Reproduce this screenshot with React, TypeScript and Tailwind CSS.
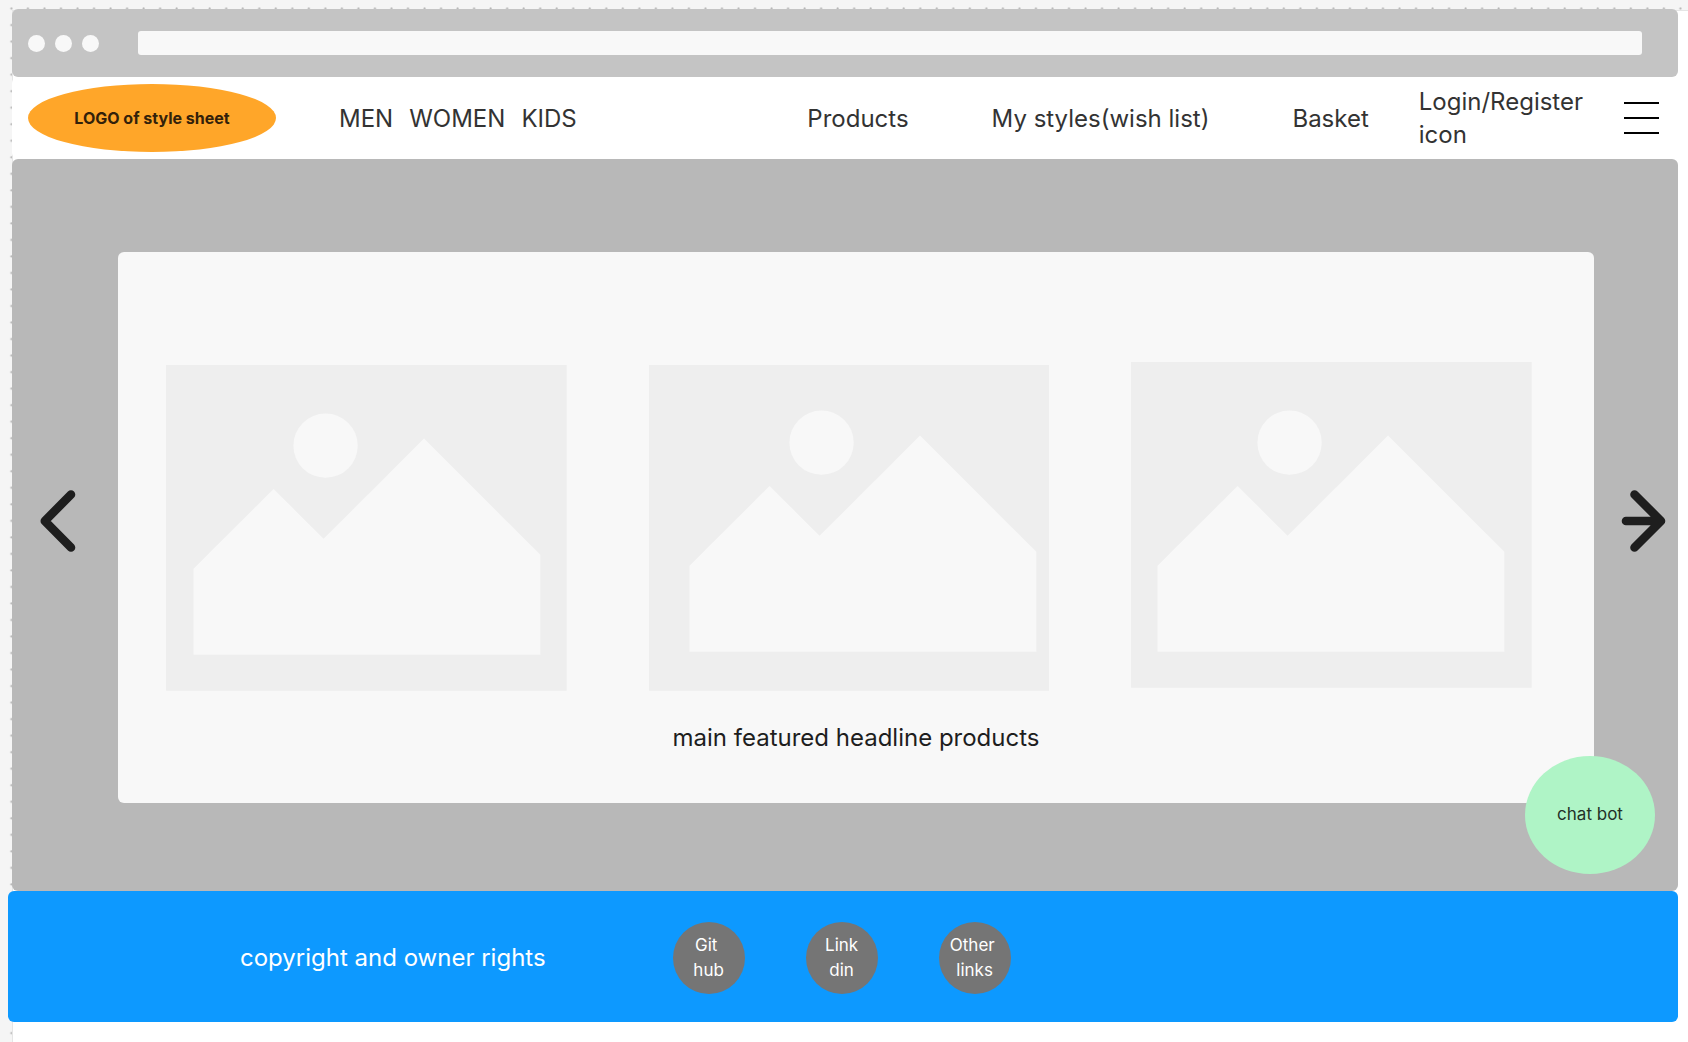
type Placeholder = { name: string; frameY: number; artX: number; artY: number };

const placeholders: Placeholder[] = [
  { name: 'Featured product 1', frameY: 3, artX: 1, artY: 3 },
  { name: 'Featured product 2', frameY: 3, artX: 14, artY: 0 },
  { name: 'Featured product 3', frameY: 0, artX: 0, artY: 0 },
];

const socialLinks = [
  { top: 'Git ', bottom: 'hub' },
  { top: 'Link', bottom: 'din' },
  { top: 'Other ', bottom: 'links' },
];

function CanvasBackdrop() {
  return (
    <>
      <svg className="absolute inset-0 h-full w-full" aria-hidden="true">
        <defs>
          <pattern id="grid" x="3" y="0.4" width="16.525" height="16.525" patternUnits="userSpaceOnUse">
            <circle cx="8.4" cy="8.2" r="1.1" fill="#b3b3b3" />
          </pattern>
        </defs>
        <rect width="100%" height="100%" fill="url(#grid)" />
      </svg>
      <div className="absolute top-[10px] right-0 bottom-0 left-3 border-t border-l border-[#e5e5e5] bg-white" />
    </>
  );
}

function BrowserBar() {
  return (
    <div className="flex h-[68px] items-center rounded-md bg-[#c4c4c4] pr-9 pl-4">
      <div className="flex gap-[10px]">
        <span className="size-[17px] rounded-full bg-[#f8f8f8]" />
        <span className="size-[17px] rounded-full bg-[#f8f8f8]" />
        <span className="size-[17px] rounded-full bg-[#f8f8f8]" />
      </div>
      <input
        type="text"
        aria-label="Address"
        className="ml-[39px] h-6 min-w-0 flex-1 rounded-[3px] bg-[#f8f8f8] px-2 text-sm outline-none"
      />
    </div>
  );
}

function NavBar() {
  return (
    <nav className="flex min-h-[82px] items-center rounded-md bg-white pr-[19px] pl-4 text-2xl leading-[33px] text-[#333333]">
      <a
        href="#home"
        className="flex h-[68px] w-[248px] shrink-0 items-center justify-center rounded-[50%] bg-[#ffa629] text-base font-bold text-[#33210a]"
      >
        LOGO of style sheet
      </a>
      <div className="ml-[63px] flex gap-4">
        <a href="#men">MEN</a>
        <a href="#women">WOMEN</a>
        <a href="#kids">KIDS</a>
      </div>
      <div className="ml-auto flex items-center">
        <a href="#products" className="mr-[83px]">Products</a>
        <a href="#styles" className="mr-[83px]">My styles(wish list)</a>
        <a href="#basket" className="mr-[50px]">Basket</a>
        <a href="#login" className="mr-[41px]">
          Login/Register
          <br />
          icon
        </a>
        <button type="button" aria-label="Menu" className="flex w-[35px] flex-col gap-[13px]">
          <span className="h-[2px] w-full bg-black" />
          <span className="h-[2px] w-full bg-black" />
          <span className="h-[2px] w-full bg-black" />
        </button>
      </div>
    </nav>
  );
}

function ProductImage({ name, frameY, artX, artY }: Placeholder) {
  return (
    <svg viewBox="0 0 401 329" className="min-w-0 flex-1" role="img" aria-label={name}>
      <rect y={frameY} width="401" height="326" fill="#eeeeee" />
      <g fill="#f8f8f8" transform={`translate(${artX} ${artY})`}>
        <circle cx="158.7" cy="80.7" r="32.2" />
        <path d="M26.5 204 L106.7 124 L156.7 174 L257.3 73.6 L373.7 190 V290 H26.5 Z" />
      </g>
    </svg>
  );
}

function Hero() {
  return (
    <section className="relative grid grid-cols-[106px_1fr_84px] items-center rounded-md bg-[#b8b8b8] pt-[93px] pb-[88px]">
      <button type="button" aria-label="Previous" className="mb-3 ml-[25px] w-12">
        <svg viewBox="0 0 48 64" className="h-16 w-12" fill="none" stroke="#1e1e1e" strokeWidth="8.6" strokeLinecap="round" strokeLinejoin="round">
          <path d="M34 5.5 L7.8 32 L34 58.5" />
        </svg>
      </button>
      <div className="rounded-md bg-[#f8f8f8] pt-[110px] pr-[62px] pb-[49px] pl-12">
        <div className="flex gap-[82px]">
          {placeholders.map((p) => (
            <ProductImage key={p.name} {...p} />
          ))}
        </div>
        <h1 className="mt-[31px] -mr-[14px] text-center text-2xl leading-8 text-[#1e1e1e]">
          main featured headline products
        </h1>
      </div>
      <button type="button" aria-label="Next" className="mb-3 ml-6 w-12">
        <svg viewBox="0 0 48 64" className="h-16 w-12" fill="none" stroke="#1e1e1e" strokeWidth="8.6" strokeLinecap="round" strokeLinejoin="round">
          <path d="M16.5 5.5 L43 32 L16.5 58.5 M8 32 H43" />
        </svg>
      </button>
      <button
        type="button"
        className="absolute right-[23px] bottom-[17px] h-[118px] w-[130px] rounded-[50%] bg-[#aff4c6] text-[17px] text-[#233128]"
      >
        chat bot
      </button>
    </section>
  );
}

function Footer() {
  return (
    <footer className="-ml-1 flex h-[131px] items-center rounded-md bg-[#0d99ff] pt-[3px] pl-[232px] text-white">
      <p className="text-2xl leading-8">copyright and owner rights</p>
      <div className="ml-[127px] flex gap-[61px]">
        {socialLinks.map((l) => (
          <a
            key={l.bottom}
            href={`#${l.bottom}`}
            className="flex size-[72px] flex-col items-center justify-center rounded-full bg-[#757575] text-[17px] leading-[25px] whitespace-pre"
          >
            <span>{l.top}</span>
            <span>{l.bottom}</span>
          </a>
        ))}
      </div>
    </footer>
  );
}

export default function App() {
  return (
    <div className="relative min-h-screen bg-[#f5f5f5] font-['Inter',sans-serif]">
      <CanvasBackdrop />
      <main className="relative pt-[9px] pr-[10px] pl-3">
        <BrowserBar />
        <NavBar />
        <Hero />
        <Footer />
      </main>
    </div>
  );
}
